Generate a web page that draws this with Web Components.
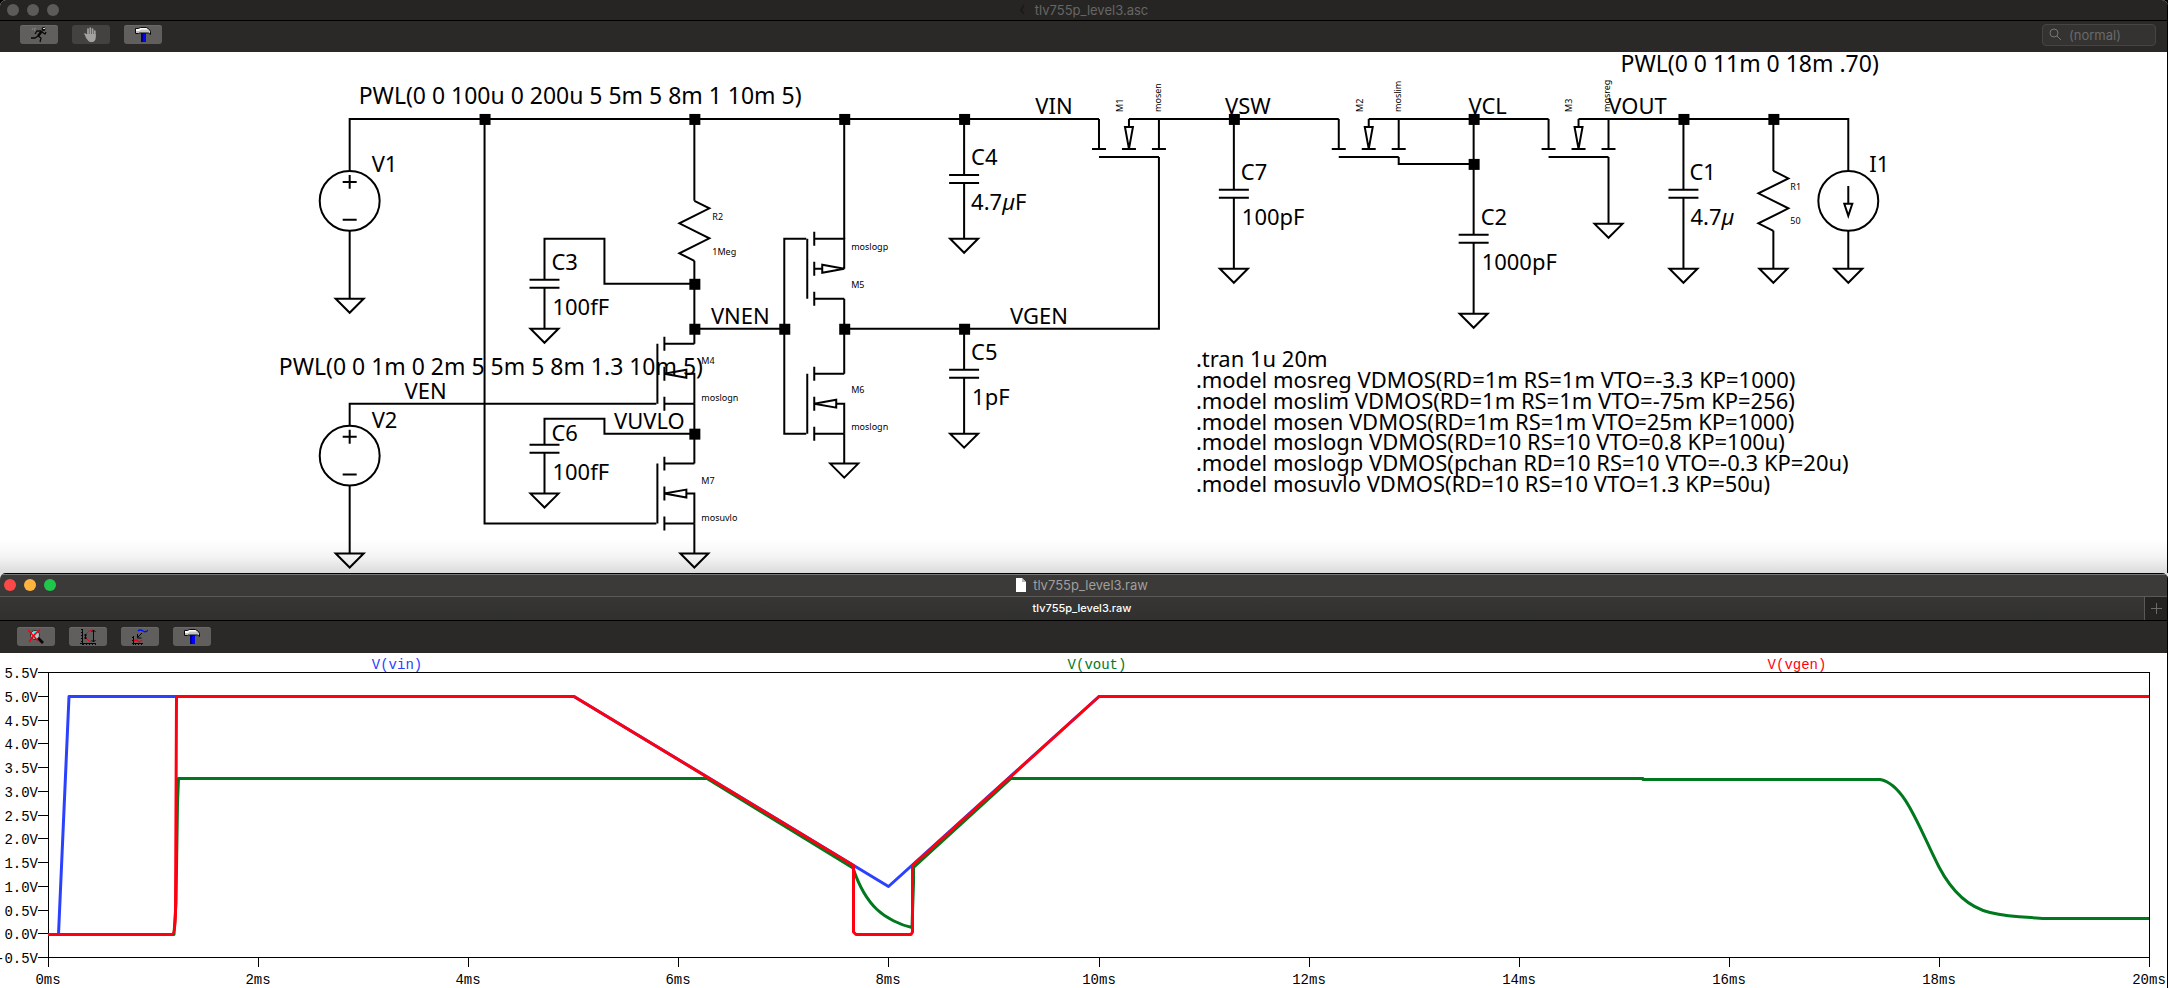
<!DOCTYPE html>
<html lang="en">
<head>
<meta charset="utf-8">
<title>tlv755p_level3</title>
<style>
  body { margin: 0; background: #000; font-family: Inter, "Liberation Sans", sans-serif; }
  spice-desktop { height: 100vh; }
</style>
</head>
<body>
<spice-desktop>
  <mac-window slot="schematic" inactive heading="tlv755p_level3.asc">
    <tool-button slot="tools" icon="run" label="Run"></tool-button>
    <tool-button slot="tools" icon="halt" label="Halt" dim></tool-button>
    <tool-button slot="tools" icon="hammer" label="Control panel"></tool-button>
    <search-box slot="end"></search-box>
    <circuit-schematic></circuit-schematic>
  </mac-window>
  <mac-window slot="plot" heading="tlv755p_level3.raw" tab="tlv755p_level3.raw">
    <tool-button slot="tools" icon="zoom" label="Zoom to fit"></tool-button>
    <tool-button slot="tools" icon="axes" label="Autorange"></tool-button>
    <tool-button slot="tools" icon="traces" label="Add traces"></tool-button>
    <tool-button slot="tools" icon="hammer" label="Control panel"></tool-button>
    <wave-plot></wave-plot>
  </mac-window>
</spice-desktop>

<script>
class SpiceDesktop extends HTMLElement {
  constructor() {
    super();
    this.attachShadow({ mode: 'open' }).innerHTML = `
      <style>
        :host { display: grid; grid-template-rows: minmax(0, 573fr) minmax(0, 415fr); }
        .back { background: linear-gradient(90deg, #e0e0e0, #e0e0e0) top / 100% 10px no-repeat; display: grid; min-height: 0; }
        .front { display: grid; min-height: 0; }
      </style>
      <div class="front"><slot name="schematic"></slot></div>
      <div class="back"><slot name="plot"></slot></div>`;
  }
}
customElements.define('spice-desktop', SpiceDesktop);

class MacWindow extends HTMLElement {
  connectedCallback() {
    const tab = this.getAttribute('tab');
    const inactive = this.hasAttribute('inactive');
    this.attachShadow({ mode: 'open' }).innerHTML = `
      <style>
        :host { display: flex; flex-direction: column; min-height: 0; position: relative;
                border-radius: 6px 6px 0 0; overflow: hidden; background: #fff; }
        :host::after { content: ""; position: absolute; inset: 0 0 0 auto; width: 1px; background: #000; }
        header { display: grid; grid-template-columns: 1fr auto 1fr; align-items: center; box-sizing: border-box;
                 height: 24px; padding: 0 8px 0 4px; border-top: 1px solid #000; border-bottom: 1px solid #5a5958;
                 background: #3b3a38; box-shadow: inset 0 1px #7a7978; }
        .lights { display: flex; gap: 8px; }
        .lights button { width: 12px; height: 12px; padding: 0; border: 0; border-radius: 50%; background: var(--c); }
        h1 { display: flex; align-items: center; gap: 7px; margin: 0; font: 400 13px/16px Inter, sans-serif; color: #a09f9e; }
        nav { display: flex; height: 23px; background: linear-gradient(#373634, #30302e); border-bottom: 1px solid #000; }
        nav a { flex: 1; padding-left: 20px; text-align: center; font: 500 11px/23px Inter, sans-serif; color: #fff; text-decoration: none; }
        nav button { width: 24px; padding: 0; border: 0; border-left: 1px solid #5a5958; background: #242322; }
        nav svg { display: block; margin: auto; }
        .tools { display: flex; align-items: center; box-sizing: border-box; height: 32px; gap: 14px; padding: 0 12px 1px 17px; background: #2a2927; flex: none; }
        .tools slot[name=end] { display: block; margin-left: auto; }
        header, nav { flex: none; }
        main { flex: 1; min-height: 0; display: grid; }
        :host([inactive]) header { height: 21px; padding-left: 7px; border-top: 0; border-bottom: 1px solid #000; background: #262524; box-shadow: none; }
        :host([inactive]) h1 { color: #676665; }
        :host([inactive]) .lights button { background: #5c5b5a; }
        :host([inactive]) .tools { height: 31px; padding-left: 20px; padding-bottom: 4px; }
        :host([inactive]) main::after { content: ""; position: absolute; inset: auto 0 0 0; height: 34px;
          background: linear-gradient(rgba(0,0,0,0), rgba(0,0,0,.04) 50%, rgba(0,0,0,.14)); }
      </style>
      <header>
        <div class="lights">
          <button aria-label="Close" style="--c:#fc4948"></button>
          <button aria-label="Minimise" style="--c:#fdb43f"></button>
          <button aria-label="Zoom" style="--c:#1fc84b"></button>
        </div>
        <h1>${inactive
          ? '<svg width="9" height="14" viewBox="0 0 9 14"><path d="M5 2L2 7l3 4" fill="none" stroke="#1c1b1a" stroke-width="2"/></svg>'
          : '<svg width="10" height="14" viewBox="0 0 10 14"><path d="M0 0h6l4 4v10H0z" fill="#fff"/><path d="M6 0v4h4z" fill="#b8b8b8"/></svg>'}<span></span></h1>
      </header>
      ${tab ? `<nav><a href="#"></a><button aria-label="New tab"><svg width="13" height="13" viewBox="0 0 13 13"><path d="M6.500 1v11M1 6.500h11" stroke="#6c6b6a" fill="none"/></svg></button></nav>` : ''}
      <div class="tools"><slot name="tools"></slot><slot name="end"></slot></div>
      <main><slot></slot></main>`;
    this.shadowRoot.querySelector('h1 span').textContent = this.getAttribute('heading');
    if (tab) this.shadowRoot.querySelector('nav a').textContent = tab;
  }
}
customElements.define('mac-window', MacWindow);

const ICONS = {
  run: `<g fill="none" stroke="#0a0a0a" stroke-width="1.300"><path d="M11 4L7 9" stroke-width="2.600"/><path d="M10 4L6 4 4 7M11 5l3 2 1-2M7 9l-3 2H0M7 9l3 2-1 4"/></g><circle cx="12.500" cy="2" r="1.900" fill="#0a0a0a"/><path d="M12 1h2v1h-2z" fill="#ddd"/><path d="M1 3l1-2M4 4L3 2l2-1" stroke="#858483" fill="none"/>`,
  halt: `<path d="M5 2v6M7.300 1v7M9.600 2v7M11.800 4v6M2 7l4 4" stroke="#a3a2a1" stroke-width="1.700" stroke-linecap="round" fill="none"/><path d="M4 7h8.600v4q0 3-3 4H7q-2-1-4-4l-1-3z" fill="#a3a2a1"/>`,
  hammer: `<path d="M6 6h5v9H6z" fill="#00f"/><path d="M6 6h2v9H6z" fill="#00007c"/><path d="M.5 1.500h3l2-1h6l3 2 1 2v3l-2-1.500H4.500l-1 .5h-3z" fill="#c4c4c4" stroke="#0a0a0a"/><path d="M1 2h3l2-1h5l2 1.500H6L4 4H1z" fill="#fff"/>`,
  zoom: `<path d="M10 9l5 5" stroke="#080808" stroke-width="3"/><circle cx="7" cy="6" r="4.500" fill="#b9c6c6" stroke="#2c2c2c"/><path d="M6 2h4v3H6z" fill="#0ff"/><path d="M5 7h3v2H5z" fill="#0ff"/><path d="M0 1l10 11M12 1Q7 4 1 13" stroke="#f00012" stroke-width="1.500" fill="none"/>`,
  axes: `<path d="M2.500 0v16M0 14.500h16" stroke="#080808" fill="none"/><path d="M1.500 0v14M3 15.500h13" stroke="#080808" stroke-dasharray="1 2" fill="none"/><path d="M6 5q3-4 7-4M6 9q3 4 6 4" stroke="#f00012" fill="none"/><path d="M5.500 5v5M4 6h3M4 9h3M13.500 1v12M11.500 3l2-2 2 2M11.500 11l2 2 2-2" stroke="#080808" fill="none"/>`,
  traces: `<path d="M1.500 7v9M0 14.500h11" stroke="#080808" fill="none"/><path d="M.5 8v7M3 15.500h8" stroke="#080808" stroke-dasharray="1 2" fill="none"/><path d="M2 12q2-2 4 0t4-1" stroke="#f00012" fill="none" stroke-width="1.300"/><path d="M6 2q2-2 5 0t5-1" stroke="#0010ff" fill="none" stroke-width="1.300"/><path d="M10 4L6 8M5.500 5v4h4" stroke="#080808" fill="none"/>`
};
class ToolButton extends HTMLElement {
  connectedCallback() {
    this.attachShadow({ mode: 'open' }).innerHTML = `
      <style>
        :host { display: block; }
        button { display: grid; place-items: center; width: 38px; height: 19px; padding: 0; border: 0; border-radius: 3px;
                 background: #605f5e; box-shadow: inset 0 1px #6b6a69; }
        :host([dim]) button { background: #434241; box-shadow: none; }
      </style>
      <button aria-label="${this.getAttribute('label')}"><svg width="16" height="16" viewBox="0 0 16 16">${ICONS[this.getAttribute('icon')]}</svg></button>`;
  }
}
customElements.define('tool-button', ToolButton);

class SearchBox extends HTMLElement {
  constructor() {
    super();
    this.attachShadow({ mode: 'open' }).innerHTML = `
      <style>
        :host { display: block; }
        label { display: flex; align-items: center; gap: 7px; box-sizing: border-box; width: 114px; height: 22px; padding: 0 6px;
                border: 1px solid #464544; border-radius: 4px; background: #343331; }
        svg { flex: none; }
        input { width: 80px; padding: 0; border: 0; outline: 0; background: none; font: 13px/18px Inter, sans-serif; color: #6b6a69; }
        input::placeholder { color: #6b6a69; opacity: 1; }
      </style>
      <label><svg width="13" height="13" viewBox="0 0 13 13" fill="none" stroke="#777675"><circle cx="5" cy="5" r="4"/><path d="M8 8l4 4"/></svg>
      <input type="text" aria-label="Search" placeholder="(normal)"></label>`;
  }
}
customElements.define('search-box', SearchBox);

/* Origin of the drawing is the top of V1; one grid step is 15 units. */
class CircuitSchematic extends HTMLElement {
  constructor() {
    super();
    const use = (id, list) => list.map(([x, y]) => `<use href="#${id}" x="${x}" y="${y}"/>`).join('');
    const text = (cls, list) => list.map(([x, y, s]) => `<text class="${cls}" x="${x}" y="${y}">${s}</text>`).join('');
    const up = list => list.map(([x, y, s]) => `<text class="small" transform="translate(${x} ${y}) rotate(-90)">${s}</text>`).join('');
    const mu = '<tspan font-style="italic">µ</tspan>';
    this.attachShadow({ mode: 'open' }).innerHTML = `
      <style>
        :host { display: block; min-height: 0; overflow: hidden; }
        svg { display: block; width: 100%; height: 100%; font-family: "Noto Sans", sans-serif; }
        .wire, .wire use, defs path, defs circle { fill: none; stroke: #000; stroke-width: 2; }
        .name { font-size: 22px; }
        .net { font-size: 22px; text-anchor: middle; }
        .value { font-size: 23px; }
        .small { font-size: 9px; }
      </style>
      <svg viewBox="-350 -67 2170 521" preserveAspectRatio="xMinYMin meet" role="img" aria-label="Circuit schematic">
        <defs>
          <path id="gnd" d="M-14 0H14L0 14Z"/>
          <path id="cap" d="M-15-4H15M-15 4H15"/>
          <path id="res" d="M0 0L15 7.500-15 22.500 15 37.500-15 52.500 0 60"/>
          <g id="src"><circle r="30"/><path d="M-7-19H7M0-26V-12M-7 19H7"/></g>
          <g id="cur"><circle r="30"/><path d="M0-15V3M-4 3H4L0 15Z"/></g>
          <path id="nmosv" d="M-37 0V60M-30-7V7M-30 23V37M-30 53V67M-30 0H0M-30 60H0M-30 30L-8 26V34ZM-8 30H0V60"/>
          <path id="pmosv" d="M-37 0V60M-30-7V7M-30 23V37M-30 53V67M-30 0H0V30M-30 60H0M-30 30H-22M0 30L-22 26V34Z"/>
          <path id="nmosh" d="M0 0V30M-7 30H7M23 30H37M53 30H67M0 38H60M60 0V30M30 0V8M30 30L26 8H34Z"/>
          <rect id="dot" x="-5" y="-5" width="11" height="11"/>
        </defs>
        <path class="wire" d="M0 52V0H750M0 112V180M0 307V285H307M0 367V435
          M135 0V405H307M345 0V82M345 142V225M195 161V120H255V165H345M195 169V210M345 210H435M345 285V345
          M195 326V300H255V315H345M195 334V375M345 405V435
          M457 120H435V315H457M495 0V120M495 180V255M495 315V345M495 210H810V38M615 0V56M615 64V120M615 210V251M615 259V315
          M780 0H990M885 0V71M885 79V150M1020 0H1200M1050 38V45H1125M1125 0V116M1125 124V195
          M1230 0H1500V52M1260 38V105M1335 0V71M1335 79V150M1425 0V52M1425 112V150M1500 112V150"/>
        ${use('gnd', [[0,180],[0,435],[195,210],[195,375],[345,435],[495,345],[615,120],[615,315],[885,150],[1125,195],[1260,105],[1335,150],[1425,150],[1500,150]])}
        ${use('cap', [[195,165],[195,330],[615,60],[615,255],[885,75],[1125,120],[1335,75]])}
        ${use('res', [[345,82],[1425,52]])}
        ${use('src', [[0,82],[0,337]])}
        ${use('cur', [[1500,82]])}
        ${use('nmosv', [[345,225],[345,345],[495,255]])}
        ${use('pmosv', [[495,120]])}
        ${use('nmosh', [[750,0],[990,0],[1200,0]])}
        ${use('dot', [[135,0],[345,0],[495,0],[615,0],[885,0],[1125,0],[1335,0],[1425,0],[345,165],[345,210],[435,210],[495,210],[615,210],[345,315],[1125,45]])}
        <g transform="translate(0 1)">
        ${text('value', [[9,-16,'PWL(0 0 100u 0 200u 5 5m 5 8m 1 10m 5)'],[-71,255,'PWL(0 0 1m 0 2m 5 5m 5 8m 1.3 10m 5)'],[1272,-48,'PWL(0 0 11m 0 18m .70)']])}
        ${text('net', [[391,204,'VNEN'],[76,279,'VEN'],[300,309,'VUVLO'],[705,-6,'VIN'],[690,204,'VGEN'],[899,-6,'VSW'],[1139,-6,'VCL'],[1289,-6,'VOUT']])}
        ${text('name', [[22,52,'V1'],[22,308,'V2'],[202,150,'C3'],[203,195,'100fF'],[202,321,'C6'],[203,360,'100fF'],
          [622,45,'C4'],[622,90,'4.7' + mu + 'F'],[622,240,'C5'],[623,285,'1pF'],[892,60,'C7'],[893,105,'100pF'],
          [1132,105,'C2'],[1133,150,'1000pF'],[1341,60,'C1'],[1342,105,'4.7' + mu],[1521,52,'I1'],
          [847,247,'.tran 1u 20m'],
          [847,268,'.model mosreg VDMOS(RD=1m RS=1m VTO=-3.3 KP=1000)'],
          [847,289,'.model moslim VDMOS(RD=1m RS=1m VTO=-75m KP=256)'],
          [847,310,'.model mosen VDMOS(RD=1m RS=1m VTO=25m KP=1000)'],
          [847,330,'.model moslogn VDMOS(RD=10 RS=10 VTO=0.8 KP=100u)'],
          [847,351,'.model moslogp VDMOS(pchan RD=10 RS=10 VTO=-0.3 KP=20u)'],
          [847,372,'.model mosuvlo VDMOS(RD=10 RS=10 VTO=1.3 KP=50u)']])}
        ${text('small', [[363,100,'R2'],[363,135,'1Meg'],[352,244,'M4'],[352,281,'moslogn'],[352,364,'M7'],[352,401,'mosuvlo'],
          [502,130,'moslogp'],[502,168,'M5'],[502,273,'M6'],[502,310,'moslogn'],[1442,70,'R1'],[1442,104,'50']])}
        ${up([[774,-8,'M1'],[812,-8,'mosen'],[1014,-8,'M2'],[1052,-8,'moslim'],[1223,-8,'M3'],[1261,-8,'mosreg']])}
        </g>
      </svg>`;
  }
}
customElements.define('circuit-schematic', CircuitSchematic);

class WavePlot extends HTMLElement {
  constructor() {
    super();
    const X = i => Math.round(48 + i * 210.1), Y = i => Math.round(19 + i * 23.75);
    let grid = '', labels = '';
    for (let i = 0; i <= 12; i++) {
      grid += `M38 ${Y(i)}.5H48`;
      labels += `<text class="y" x="38" y="${Y(i) + 6}">${(5.5 - i / 2).toFixed(1)}V</text>`;
    }
    for (let i = 0; i <= 10; i++) {
      grid += `M${X(i)}.5 305V314`;
      labels += `<text class="x" x="${X(i)}" y="331">${i * 2}ms</text>`;
    }
    this.attachShadow({ mode: 'open' }).innerHTML = `
      <style>
        :host { display: block; min-height: 0; overflow: hidden; background: #fff; }
        svg { display: block; width: 100%; height: 100%; font: 14px "Liberation Mono", monospace; }
        .axis { fill: none; stroke: #000; shape-rendering: crispEdges; }
        .trace { fill: none; stroke-width: 3; stroke-linejoin: round; }
        .y { text-anchor: end; }
        .x { text-anchor: middle; }
      </style>
      <svg viewBox="0 0 2168 335" preserveAspectRatio="xMinYMin meet" role="img" aria-label="Waveforms">
        <path class="axis" d="M48.500 19.500H2149.500V304.500H48.500Z${grid}"/>
        ${labels}
        <text class="x" x="397" y="16" fill="#2a41ff">V(vin)</text>
        <text class="x" x="1097" y="16" fill="#00781e">V(vout)</text>
        <text class="x" x="1797" y="16" fill="#ff0010">V(vgen)</text>
        <path class="trace" stroke="#2a41ff" d="M48 281.500H58.500L69 43.500H574L888.500 233.500L1099 43.500H2149"/>
        <path class="trace" stroke="#00781e" d="M48 281.500H174L176 250L177.500 150L178.500 125.500H707L853 215
          C860 236 868 248 877 256.500S900 272 912 274.500L913.500 230V214.500L1011 125.500H1643V126.500H1880
          C1905 131 1919 175 1939 214C1950 235 1967 254 1990 259.500S2030 264 2045 265.500H2149"/>
        <path class="trace" stroke="#ff0010" d="M48 281.500H172Q175 281 175.500 260L176.500 43.500H574L853.500 212.500V279L856 281.500H911L912.500 279V212.500L1099 43.500H2149"/>
      </svg>`;
  }
}
customElements.define('wave-plot', WavePlot);
</script>
</body>
</html>
